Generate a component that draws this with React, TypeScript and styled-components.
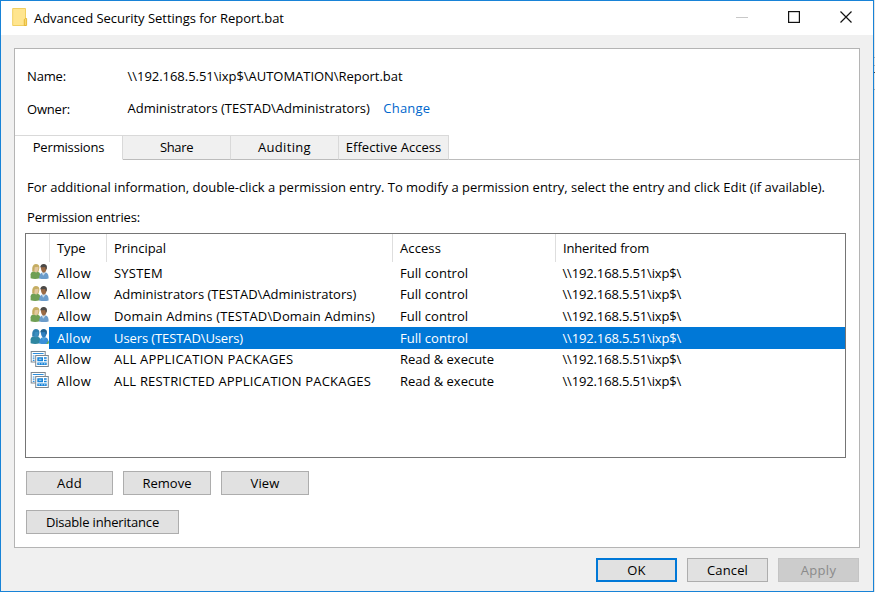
import React from 'react';
import styled, { createGlobalStyle } from 'styled-components';

const GlobalStyle = createGlobalStyle`
  * { box-sizing: border-box; }
  body {
    margin: 0;
    background: linear-gradient(#e4e4e4 57px, #aaa 57px 58px, #e4e4e4 58px 65px, #aaa 65px 66px, #e4e4e4 66px 72px, #444 72px 73px, #e4e4e4 73px 89px, #aaa 89px 90px, #e4e4e4 90px);
    font: 13px/18px "Open Sans", sans-serif;
    color: #000;
    overflow: hidden;
  }
`;

const Dialog = styled.div`
  width: 874px;
  height: 592px;
  display: flex;
  flex-direction: column;
  border: 1px solid #1883d7;
  background: #f0f0f0;
`;

const TitleBar = styled.header`
  height: 34px;
  flex: none;
  display: flex;
  align-items: center;
  padding-left: 11px;
  background: #fff;
`;

const Label = styled.span<{ $ls?: number }>`
  letter-spacing: ${(p) => p.$ls ?? 0}px;
  white-space: pre;
`;

const Title = styled(Label)`
  margin-left: 6px;
  flex: 1;
`;

const WindowControls = styled.div`
  display: flex;
  align-items: center;
  gap: 40px;
  padding: 0 21px 2px 0;
`;

const Panel = styled.main`
  width: 846px;
  height: 500px;
  margin: 13px 0 0 13px;
  flex: none;
  display: flex;
  flex-direction: column;
  border: 1px solid #b4b4b4;
  background: #fff;
`;

const Details = styled.dl`
  height: 86px;
  flex: none;
  margin: 0;
  padding: 18px 0 0 12px;
  display: grid;
  grid-template-columns: 100.5px 1fr;
  grid-template-rows: 18px 18px;
  row-gap: 14px;
  dt, dd { margin: 0; }
  dt:nth-of-type(2) { padding-top: 1px; }
`;

const Link = styled(Label)`
  color: #0066cc;
  margin-left: 13.5px;
`;

const TabStrip = styled.nav`
  height: 25px;
  flex: none;
  display: flex;
`;

const Tab = styled.div<{ $width: number; $active?: boolean }>`
  width: ${(p) => p.$width}px;
  display: flex;
  align-items: center;
  justify-content: center;
  padding-bottom: 1px;
  border-top: 1px solid #d9d9d9;
  border-right: 1px solid #d9d9d9;
  border-bottom: ${(p) => (p.$active ? '1px solid #fff' : '1px solid #bcbcbc')};
  background: ${(p) => (p.$active ? '#fff' : '#f0f0f0')};
`;

const TabRest = styled.div`
  flex: 1;
  border-bottom: 1px solid #bcbcbc;
`;

const TabPage = styled.section`
  flex: 1;
  padding: 18px 0 0 11px;
  display: flex;
  flex-direction: column;
  align-items: flex-start;
`;

const Caption = styled.p<{ $top?: number }>`
  margin: ${(p) => p.$top ?? 0}px 0 0 1px;
  height: 18px;
`;

const List = styled.div`
  width: 821px;
  height: 225px;
  margin: 7px 0 0 -1px;
  border: 1px solid #757575;
`;

const ListHeader = styled.div`
  display: grid;
  grid-template-columns: 24px 57px 286px 163px 1fr;
  height: 28px;
`;

const HeaderCell = styled.div`
  display: flex;
  align-items: center;
  padding-left: 7px;
  border-right: 1px solid #dedede;
  &:last-child { border-right: 0; }
`;

const Entry = styled.div`
  display: grid;
  grid-template-columns: 23px 1fr;
  height: 21.65px;
`;

const EntryIcon = styled.div`
  display: flex;
  justify-content: flex-end;
  svg { flex: none; }
`;

const EntryCells = styled.div<{ $selected?: boolean }>`
  display: grid;
  grid-template-columns: 57px 286px 162.5px 1fr;
  align-items: center;
  padding-left: 8px;
  color: ${(p) => (p.$selected ? '#fff' : '#000')};
  background: ${(p) => (p.$selected ? '#0078d7' : 'transparent')};
`;

const ButtonRow = styled.div<{ $top: number }>`
  display: flex;
  gap: 10px;
  margin-top: ${(p) => p.$top}px;
`;

const Button = styled.button<{ $width: number; $kind?: 'default' | 'disabled' }>`
  width: ${(p) => p.$width}px;
  height: 24px;
  padding: 0;
  font: inherit;
  border-radius: 0;
  border: ${(p) =>
    p.$kind === 'default' ? '2px solid #0078d7' : p.$kind === 'disabled' ? '1px solid #c4c4c4' : '1px solid #adadad'};
  color: ${(p) => (p.$kind === 'disabled' ? '#8a8a8a' : '#000')};
  background: ${(p) => (p.$kind === 'disabled' ? '#cccccc' : '#e1e1e1')};
`;

const Footer = styled.footer`
  display: flex;
  justify-content: flex-end;
  gap: 10px;
  padding: 10px 14px 0 0;
`;

const FolderIcon = () => (
  <svg width="16" height="20" viewBox="0 0 16 20">
    <path d="M.7 .5H13.5V17.5H.7Z" fill="#ffe58f" stroke="#f1cf60" />
    <path d="M12.3 17.5V11.5L13.4 10.5H14.6V17.5Z" fill="#f8d66d" stroke="#e3b42c" strokeWidth=".9" />
  </svg>
);

const PeopleIcon = ({ selected }: { selected?: boolean }) => {
  const c = selected
    ? { hair: '#2f7fae', face: '#3b8fc0', shirt: '#2e86a0', hair2: '#20608f', face2: '#2f7fc0', body2: '#3a8fd8', collar: '#4da3dd' }
    : { hair: '#c5ad62', face: '#e2c8a0', shirt: '#6f9f54', hair2: '#4b4a48', face2: '#9a6a45', body2: '#6b9ccb', collar: '#c6d9ea' };
  return (
    <svg width="19" height="20" viewBox="0 0 19 20">
      <path d="M.6 16.2V12.2Q.8 9.9 4 9.2L7.6 9.4Q10.2 10.2 10.4 12.8L9.8 16.2Q5 17.6.6 16.2Z" fill={c.shirt} />
      <path d="M2.2 9.5Q1.6 2.2 5.8 2Q9.6 2 9.4 6L8.4 9.8Z" fill={c.hair} />
      <path d="M4.7 5.2L8.4 4.7Q8.8 8.4 6.9 9.3L6.4 10.7L4.3 9.5Z" fill={c.face} />
      <path d="M9.2 16.4Q9 11.9 11.8 10.7L16 10.5Q18.8 11.5 18.6 16.4Q14 17.8 9.2 16.4Z" fill={c.body2} />
      <path d="M11.6 10.6L13.1 13.8L15.9 10.5Z" fill={c.collar} />
      <path d="M10.7 4.5Q11.2 2.4 13.8 2.4Q16.9 2.6 16.6 6.2Q16.2 10.2 13.8 10.8Q11 10.3 10.7 4.5Z" fill={c.face2} />
      <path d="M10.3 5.3Q10.8 1.9 14 2Q17.5 2.3 16.8 6.6L15.9 8L15.2 5.1Q12.3 5.4 10.3 5.3Z" fill={c.hair2} />
      {selected && <path d="M16.2 16.9L18.7 13.6V16.6Z" fill="#5fae3f" />}
    </svg>
  );
};

const PackageIcon = () => (
  <svg width="19" height="20" viewBox="0 0 19 20">
    <rect x="1.2" y="2.5" width="14" height="10.5" fill="#fff" stroke="#7b8791" />
    <path d="M2.8 4.5H13.6M2.8 7H4.5M2.8 9.2H4.5M2.8 11.4H4.5" stroke="#2c8fe0" strokeWidth="1.2" />
    <rect x="5.7" y="6.5" width="12.6" height="11" fill="#fff" stroke="#7b8791" />
    <path d="M7.3 8.2H13V12.3H7.3ZM14 8.2H16.7V9.8H14ZM14 10.7H16.7V12.3H14ZM7.3 13.5H16.7V16.1H7.3Z" fill="#1683d8" />
    <path d="M8.8 10.2H11.5M8.5 14.8H10M11.2 14.8H12.7M13.9 14.8H15.4" stroke="#d8ecfb" strokeWidth=".9" />
  </svg>
);

type Text = [string, number];
type EntryData = { icon: 'people' | 'package'; selected?: boolean; principal: Text; access: Text };

const FULL: Text = ['Full control', 0.03];
const READ: Text = ['Read & execute', -0.02];

const ENTRIES: EntryData[] = [
  { icon: 'people', principal: ['SYSTEM', 0.23], access: FULL },
  { icon: 'people', principal: ['Administrators (TESTAD\\Administrators)', 0], access: FULL },
  { icon: 'people', principal: ['Domain Admins (TESTAD\\Domain Admins)', 0.146], access: FULL },
  { icon: 'people', selected: true, principal: ['Users (TESTAD\\Users)', -0.1], access: FULL },
  { icon: 'package', principal: ['ALL APPLICATION PACKAGES', 0.22], access: READ },
  { icon: 'package', principal: ['ALL RESTRICTED APPLICATION PACKAGES', 0.18], access: READ },
];

const HEADERS: Text[] = [['', 0], ['Type', -0.1], ['Principal', -0.04], ['Access', 0.1], ['Inherited from', -0.16]];

export default function App() {
  return (
    <>
      <GlobalStyle />
      <Dialog>
        <TitleBar>
          <FolderIcon />
          <Title $ls={-0.03}>Advanced Security Settings for Report.bat</Title>
          <WindowControls>
            <svg width="12" height="12" viewBox="0 0 12 12"><path d="M0 6.5H12" stroke="#c8c8c8" /></svg>
            <svg width="12" height="12" viewBox="0 0 12 12"><rect x=".6" y=".6" width="10.8" height="10.8" fill="none" stroke="#111" strokeWidth="1.2" /></svg>
            <svg width="12" height="12" viewBox="0 0 12 12"><path d="M.5.5L11.5 11.5M11.5.5L.5 11.5" stroke="#111" strokeWidth="1.2" /></svg>
          </WindowControls>
        </TitleBar>
        <Panel>
          <Details>
            <dt><Label $ls={-0.15}>Name:</Label></dt>
            <dd><Label $ls={-0.03}>{'\\\\192.168.5.51\\ixp$\\AUTOMATION\\Report.bat'}</Label></dd>
            <dt><Label $ls={-0.2}>Owner:</Label></dt>
            <dd>
              <Label>{'Administrators (TESTAD\\Administrators)'}</Label>
              <Link $ls={0.21}>Change</Link>
            </dd>
          </Details>
          <TabStrip>
            <Tab $width={108} $active><Label $ls={-0.17}>Permissions</Label></Tab>
            <Tab $width={108}><Label $ls={-0.35}>Share</Label></Tab>
            <Tab $width={108}><Label $ls={0.33}>Auditing</Label></Tab>
            <Tab $width={110}><Label $ls={0.03}>Effective Access</Label></Tab>
            <TabRest />
          </TabStrip>
          <TabPage>
            <Caption>
              <Label $ls={-0.008}>For additional information, double-click a permission entry. To modify a permission entry, select the entry and click Edit (if available).</Label>
            </Caption>
            <Caption $top={12}><Label $ls={-0.16}>Permission entries:</Label></Caption>
            <List>
              <ListHeader>
                {HEADERS.map(([text, ls], i) => (
                  <HeaderCell key={i}><Label $ls={ls}>{text}</Label></HeaderCell>
                ))}
              </ListHeader>
              {ENTRIES.map((e) => (
                <Entry key={e.principal[0]}>
                  <EntryIcon>{e.icon === 'people' ? <PeopleIcon selected={e.selected} /> : <PackageIcon />}</EntryIcon>
                  <EntryCells $selected={e.selected}>
                    <Label $ls={0.26}>Allow</Label>
                    <Label $ls={e.principal[1]}>{e.principal[0]}</Label>
                    <Label $ls={e.access[1]}>{e.access[0]}</Label>
                    <Label $ls={-0.15}>{'\\\\192.168.5.51\\ixp$\\'}</Label>
                  </EntryCells>
                </Entry>
              ))}
            </List>
            <ButtonRow $top={13}>
              <Button $width={87}><Label $ls={0.29}>Add</Label></Button>
              <Button $width={88}><Label>Remove</Label></Button>
              <Button $width={88}><Label $ls={0.15}>View</Label></Button>
            </ButtonRow>
            <ButtonRow $top={15}>
              <Button $width={153}><Label $ls={-0.18}>Disable inheritance</Label></Button>
            </ButtonRow>
          </TabPage>
        </Panel>
        <Footer>
          <Button $width={81} $kind="default"><Label $ls={0.21}>OK</Label></Button>
          <Button $width={81}><Label $ls={0.13}>Cancel</Label></Button>
          <Button $width={81} $kind="disabled"><Label $ls={0.31}>Apply</Label></Button>
        </Footer>
      </Dialog>
    </>
  );
}
